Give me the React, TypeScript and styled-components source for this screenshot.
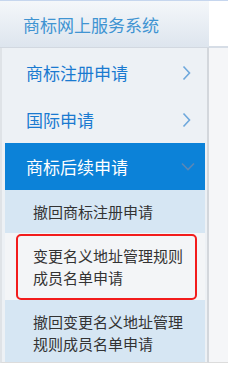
import styled, { createGlobalStyle } from 'styled-components';

const GlobalStyle = createGlobalStyle`
  body {
    margin: 0;
    background: #fff;
    font-family: "Noto Sans CJK SC", "Noto Sans", sans-serif;
  }
`;

const Page = styled.div`
  width: 228px;
  display: grid;
  grid-template-columns: 209px 1fr;
  border-top: 1px solid #c6d6ee;
`;

const Header = styled.div`
  height: 46px;
  border-bottom: 1px solid #d2d8e0;
  background: linear-gradient(#f4f7fa, #dde5ee);
  display: flex;
  align-items: center;
  padding-left: 23px;
  font-size: 17px;
  color: #4094d2;
`;

const HeaderFill = styled.div`
  height: 45px;
  background: #fff;
  border-bottom: 2px solid #d6dde6;
`;

const Sidebar = styled.nav`
  box-sizing: border-box;
  height: 315px;
  border-left: 2px solid #dfe3e7;
  border-right: 2px solid #d3d7dc;
  border-bottom: 1px solid #dcdcdc;
  padding: 1px 2px 0 3px;
  background: #edf1f5;
  overflow: hidden;
`;

const Content = styled.div`
  box-sizing: border-box;
  height: 315px;
  background: #f5f6f8;
  border-bottom: 1px solid #dcdcdc;
`;

const MenuItem = styled.div<{ $active?: boolean }>`
  height: 47px;
  display: flex;
  align-items: center;
  justify-content: space-between;
  padding: 0 ${(p) => (p.$active ? '10px' : '14px')} 0 21px;
  font-size: 17px;
  color: ${(p) => (p.$active ? '#fff' : '#1a7ad0')};
  background: ${(p) => (p.$active ? '#0c82d8' : 'transparent')};
`;

const SubMenu = styled.div`
  display: flex;
  flex-direction: column;
`;

const SubItem = styled.div<{ $plain?: boolean }>`
  font-size: 15px;
  line-height: 22px;
  color: #333;
  background: ${(p) => (p.$plain ? '#f3f5f7' : '#d6e6f3')};
`;

const SubSingle = styled(SubItem)`
  height: 43px;
  display: flex;
  align-items: center;
  padding-left: 28px;
`;

const SubDouble = styled(SubItem)`
  padding: 11px 0 10px 28px;
`;

const SubHighlighted = styled(SubItem)`
  padding: 1px 8px 0 11px;
`;

const Highlight = styled.div`
  border: 2px solid #f21c1c;
  border-radius: 5px;
  padding: 9px 8px 9px 15px;
`;

const ChevronRight = () => (
  <svg width="9" height="16" viewBox="0 0 9 16" fill="none">
    <path d="M1.5 1.5 L7.5 8 L1.5 14.5" stroke="#6ea8dc" strokeWidth="1.6" />
  </svg>
);

const ChevronDown = () => (
  <svg width="14" height="9" viewBox="0 0 14 9" fill="none">
    <path d="M1 1.5 L7 7.5 L13 1.5" stroke="#5a87b6" strokeWidth="1.6" />
  </svg>
);

const App = () => {
  return (
    <>
      <GlobalStyle />
      <Page>
        <Header>商标网上服务系统</Header>
        <HeaderFill />
        <Sidebar>
          <MenuItem>
            商标注册申请
            <ChevronRight />
          </MenuItem>
          <MenuItem>
            国际申请
            <ChevronRight />
          </MenuItem>
          <MenuItem $active>
            商标后续申请
            <ChevronDown />
          </MenuItem>
          <SubMenu>
            <SubSingle>撤回商标注册申请</SubSingle>
            <SubHighlighted $plain>
              <Highlight>
                变更名义地址管理规则
                <br />
                成员名单申请
              </Highlight>
            </SubHighlighted>
            <SubDouble>
              撤回变更名义地址管理
              <br />
              规则成员名单申请
            </SubDouble>
          </SubMenu>
        </Sidebar>
        <Content />
      </Page>
    </>
  );
};

export default App;
